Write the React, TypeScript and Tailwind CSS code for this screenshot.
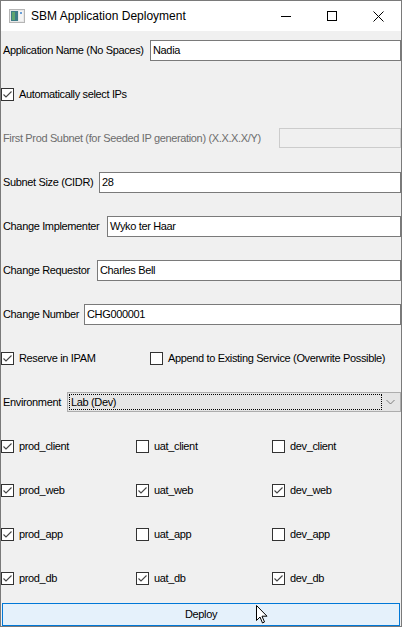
import React from "react";

const font = { fontFamily: '"Liberation Sans", Arial, sans-serif' };

function Check({ checked }: { checked?: boolean }) {
  return (
    <span className="flex h-[13px] w-[13px] shrink-0 items-center justify-center border border-[#333333] bg-white">
      {checked && (
        <svg width="11" height="11" viewBox="0 0 11 11">
          <path d="M1.5 5.5 L4 8 L9.5 2.5" fill="none" stroke="#444" strokeWidth="1.1" />
        </svg>
      )}
    </span>
  );
}

function CheckItem({ label, checked }: { label: string; checked?: boolean }) {
  return (
    <div className="flex h-[24px] items-center gap-[5px]">
      <Check checked={checked} />
      <span className="whitespace-nowrap">{label}</span>
    </div>
  );
}

// labelWidth puts the entry box where the original Tk grid put it
function Field({ label, value, labelWidth }: { label: string; value: string; labelWidth: string }) {
  return (
    <div className="flex h-[24px] items-center">
      <span className={`${labelWidth} shrink-0 whitespace-nowrap pl-[2px]`}>{label}</span>
      <div className="flex h-[21px] flex-1 items-center border border-[#7a7a7a] bg-white pl-[2px]">{value}</div>
    </div>
  );
}

const services = [
  ["prod_client", true, "uat_client", false, "dev_client", false],
  ["prod_web", true, "uat_web", true, "dev_web", true],
  ["prod_app", true, "uat_app", false, "dev_app", false],
  ["prod_db", true, "uat_db", true, "dev_db", true],
] as const;

export default function App() {
  return (
    <div
      className="relative flex h-[627px] w-[402px] flex-col border border-[#7a7a7a] bg-[#f0f0f0] text-[11px] tracking-[-0.35px] text-black"
      style={font}
    >
      {/* title bar */}
      <div className="flex h-[30px] items-center bg-white">
        <svg className="ml-[8px]" width="16" height="14" viewBox="0 0 16 14">
          <rect x="0.5" y="0.5" width="15" height="13" fill="#e8e8e8" stroke="#b5b5b5" />
          <rect x="2" y="2" width="7" height="10" fill="#3d7c86" />
          <rect x="3" y="3" width="3" height="8" fill="#5fa56e" />
          <rect x="10" y="2" width="4" height="10" fill="#f4f4f4" />
          <rect x="11" y="3" width="2" height="2" fill="#6a9fd8" />
        </svg>
        <span className="ml-[6px] text-[12px] tracking-normal">SBM Application Deployment</span>
        <div className="ml-auto flex h-full">
          <div className="flex w-[46px] items-center justify-center">
            <span className="block h-px w-[10px] bg-black" />
          </div>
          <div className="flex w-[46px] items-center justify-center">
            <span className="block h-[10px] w-[10px] border border-black" />
          </div>
          <div className="flex w-[46px] items-center justify-center">
            <svg width="11" height="11" viewBox="0 0 11 11">
              <path d="M0.5 0.5 L10.5 10.5 M10.5 0.5 L0.5 10.5" stroke="#000" strokeWidth="1" />
            </svg>
          </div>
        </div>
      </div>

      {/* form */}
      <div className="flex flex-1 flex-col pt-[7px]">
        <div className="flex flex-col gap-[20px]">
          <Field label="Application Name (No Spaces)" value="Nadia" labelWidth="w-[149px]" />
          <CheckItem label="Automatically select IPs" checked />
          <div className="flex h-[24px] items-center text-[#6d6d6d]">
            <span className="w-[278px] shrink-0 whitespace-nowrap pl-[2px]">
              First Prod Subnet (for Seeded IP generation) (X.X.X.X/Y)
            </span>
            <div className="h-[20px] flex-1 border border-[#cccccc] bg-[#f0f0f0]" />
          </div>
          <Field label="Subnet Size (CIDR)" value="28" labelWidth="w-[98px]" />
          <Field label="Change Implementer" value="Wyko ter Haar" labelWidth="w-[106px]" />
          <Field label="Change Requestor" value="Charles Bell" labelWidth="w-[96px]" />
          <Field label="Change Number" value="CHG000001" labelWidth="w-[83px]" />
          <div className="flex h-[24px] items-center">
            <div className="w-[149px]">
              <CheckItem label="Reserve in IPAM" checked />
            </div>
            <CheckItem label="Append to Existing Service (Overwrite Possible)" />
          </div>
          <div className="flex h-[24px] items-center">
            <span className="w-[66px] shrink-0 pl-[2px]">Environment</span>
            <div className="flex h-[20px] flex-1 items-center border border-[#adadad] bg-[#e5e5e5] p-[1px]">
              <div className="flex h-full flex-1 items-center border border-dotted border-black pl-[1px]">Lab (Dev)</div>
              <div className="flex w-[17px] items-center justify-center">
                <svg width="9" height="6" viewBox="0 0 9 6">
                  <path d="M0.5 1 L4.5 5 L8.5 1" fill="none" stroke="#707070" strokeWidth="0.9" />
                </svg>
              </div>
            </div>
          </div>
          {services.map((row) => (
            <div key={row[0]} className="grid grid-cols-[135px_136px_1fr]">
              <CheckItem label={row[0]} checked={row[1]} />
              <CheckItem label={row[2]} checked={row[3]} />
              <CheckItem label={row[4]} checked={row[5]} />
            </div>
          ))}
        </div>

        <button className="mx-[1px] mt-auto flex h-[23px] items-center justify-center border border-[#0078d7] bg-[#e5f1fb] text-[11px]">
          Deploy
        </button>
      </div>

      {/* mouse pointer */}
      <svg className="absolute left-[254px] top-[603px]" width="14" height="21" viewBox="0 0 14 21">
        <path
          d="M1.5 1.5 L1.5 16.5 L5 13 L7.5 19 L9.5 18 L7 12.2 L12 12.2 Z"
          fill="#fff"
          stroke="#000"
          strokeWidth="1"
          strokeLinejoin="miter"
        />
      </svg>
    </div>
  );
}
